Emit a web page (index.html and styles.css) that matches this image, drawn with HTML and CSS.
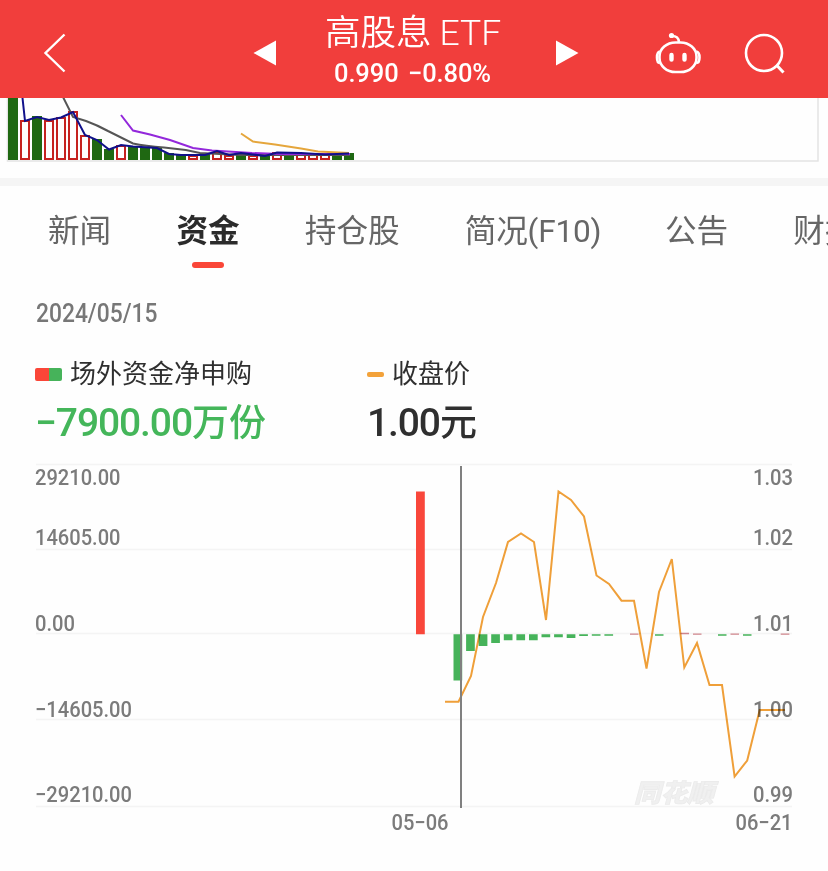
FILE: index.html
```
<!DOCTYPE html>
<html lang="zh-CN">
<head>
<meta charset="utf-8">
<title>高股息ETF</title>
<link rel="stylesheet" href="styles.css">
</head>
<body>
<header class="topbar">
  <svg class="back" width="24" height="42" viewBox="0 0 24 42"><path d="M21.500 2.500L2.500 21L21.500 39.500" fill="none" stroke="#fff" stroke-width="2.400"/></svg>
  <svg class="prev" width="24" height="26" viewBox="0 0 24 26"><path d="M0.500 13L23 0.500V25.500Z" fill="#fff"/></svg>
  <div class="title">
    <h1>高股息<span>ETF</span></h1>
    <p><span>0.990</span><span>−0.80%</span></p>
  </div>
  <svg class="next" width="24" height="26" viewBox="0 0 24 26"><path d="M23.500 13L1 0.500V25.500Z" fill="#fff"/></svg>
  <svg class="robot" width="48" height="44" viewBox="0 0 48 44" fill="none" stroke="#fff" stroke-width="2.600">
    <rect x="4.500" y="11.500" width="37" height="29.500" rx="16" ry="14"/>
    <path d="M4.800 20.500Q2 21 2 26.500T4.800 32M41.200 20.500Q44.500 21 44.500 26.500T41.200 32M24 11C23.500 6 21 5 17 5"/>
    <circle cx="16.500" cy="4.500" r="2.600" fill="#fff" stroke="none"/>
    <path d="M16.500 24V28.500M29.500 24V28.500" stroke-width="4.400" stroke-linecap="round"/>
  </svg>
  <svg class="search" width="42" height="42" viewBox="0 0 42 42" fill="none" stroke="#fff" stroke-width="2.600"><circle cx="20" cy="20" r="18"/><path d="M32.500 32L39.500 39.500" stroke-width="3"/></svg>
</header>

<section class="volume">
  <svg width="828" height="80" viewBox="0 98 828 80">
    <path d="M7.500 98V161H818V98" fill="none" stroke="#e4e4e4" stroke-width="1.500"/>
    <path fill="#1f6812" d="M8 98h10v62H8zM32 116h10v44H32zM92 139h10v21H92zM104 149h10v11h-10zM128 146h10v14h-10zM140 147h10v13h-10zM152 148h10v12h-10zM164 153h10v7h-10zM176 155h10v5h-10zM200 153h10v7h-10zM236 153h10v7h-10zM260 154h10v6h-10zM284 152h10v8h-10zM332 153h10v7h-10zM344 153h10v7h-10z"/>
    <path fill="none" stroke="#c5221f" stroke-width="2" d="M21 121h8v38h-8zM45 121h8v38h-8zM57 118h8v41h-8zM69 112h8v47h-8zM81 136h8v23h-8zM117 146h8v13h-8zM189 156h8v3h-8zM213 153h8v6h-8zM225 156h8v3h-8zM249 156h8v3h-8zM273 153h8v6h-8zM297 154h8v5h-8zM309 155h8v4h-8zM321 155h8v4h-8z"/>
    <g fill="none" stroke-width="2">
      <path stroke="#555" d="M63 97L73 117L86 121Q97 125 108 131L133 143.500Q145 146 164 147.500T200 153L240 155H350"/>
      <path stroke="#9328db" d="M121 115L133 130.500L150 134.500L170 140L193 148L212 150.500L252 153L280 154L350 154"/>
      <path stroke="#e5a63c" d="M241 133.500L253 141.500L275 144.500L301 148.500L318 151.500L349 153"/>
      <path stroke="#10108a" d="M22.500 98L25 121L37 117L49 120L61 117.500L73 112L85 135L97 140L109 149.500L121 145L133 146.500L157 148L169 154L181 155H205L217 151L229 155L241 153L253 154.500L265 156L277 152.500L301 153L325 154.500L349 153.500"/>
    </g>
  </svg>
</section>

<nav class="tabs">
  <a>新闻</a><a class="active">资金</a><a>持仓股</a><a class="wide">简况<span>(F10)</span></a><a>公告</a><a>财报</a>
</nav>

<main>
  <p class="date">2024/05/15</p>
  <div class="summary">
    <div class="metric flow">
      <div class="label"><i class="swatch"></i>场外资金净申购</div>
      <div class="value"><span>−7900.00</span>万份</div>
    </div>
    <div class="metric price">
      <div class="label"><i class="dash"></i>收盘价</div>
      <div class="value"><span>1.00</span>元</div>
    </div>
  </div>
  <svg class="chart" width="828" height="411" viewBox="0 460 828 411">
    <path d="M36 464.500H792M36 549.500H792M36 633.500H792M36 719.500H792M36 806.500H792" stroke="#f4f4f4" stroke-width="1.500"/>
    <text class="mark" x="634" y="802" textLength="80" lengthAdjust="spacingAndGlyphs">同花顺</text>
    <path fill="#f9473b" d="M416 491.500h8.800V634.300H416z"/>
    <path fill="#46b35a" d="M453.500 634.300h8.700v46.300h-8.700zM466.100 634.300h8.700v16.700h-8.700zM478.700 634.300h8.700v11.700h-8.700zM491.200 634.300h8.700v8.800h-8.700zM503.800 634.300h8.700v6h-8.700zM516.400 634.300h8.700v6h-8.700zM529 634.300h8.700v6h-8.700zM541.500 634.300h8.700v3h-8.700zM554.100 634.300h8.700v3h-8.700zM566.700 634.300h8.700v3.700h-8.700zM579.200 634.300h8.700v1.700h-8.700zM591.800 634.300h8.700v1.400h-8.700zM604.400 634.300h8.700v1.400h-8.700zM655 634.300h8.500v1.400H655zM718 634.300h8.500v1.400H718zM743 634.300h8.500v1.400H743z"/>
    <path fill="#cf858c" d="M630 633.500h8.500v1.200H630zM680.500 632.700h8.500v1.600h-8.500zM693 633.500h8.500v1.200H693zM730.500 633.500h8.500v1.200h-8.500zM780.700 633.500h8.700v1.200h-8.700z"/>
    <g class="axis">
      <text x="35" y="485" textLength="85.500" lengthAdjust="spacingAndGlyphs">29210.00</text>
      <text x="35" y="545" textLength="85.500" lengthAdjust="spacingAndGlyphs">14605.00</text>
      <text x="35" y="631" textLength="40" lengthAdjust="spacingAndGlyphs">0.00</text>
      <text x="35" y="717" textLength="97" lengthAdjust="spacingAndGlyphs">−14605.00</text>
      <text x="35" y="802" textLength="97" lengthAdjust="spacingAndGlyphs">−29210.00</text>
      <text x="753" y="485" textLength="40" lengthAdjust="spacingAndGlyphs">1.03</text>
      <text x="753" y="545" textLength="40" lengthAdjust="spacingAndGlyphs">1.02</text>
      <text x="753" y="631" textLength="40" lengthAdjust="spacingAndGlyphs">1.01</text>
      <text x="753" y="717" textLength="40" lengthAdjust="spacingAndGlyphs">1.00</text>
      <text x="753" y="802" textLength="40" lengthAdjust="spacingAndGlyphs">0.99</text>
      <text x="391.500" y="830" textLength="57" lengthAdjust="spacingAndGlyphs">05−06</text>
      <text x="735.500" y="830" textLength="57" lengthAdjust="spacingAndGlyphs">06−21</text>
    </g>
    <path class="close" d="M445 701.700H458.500L471 676L483 617L496 583L508 542L521 533.500L534 542L546 620L558.500 491.500L571 500L584 516.500L596.500 575.500L609 584L621.500 600.700H634L646.500 668.500L659 592L671.800 559L684.300 667.500L697 643L709.500 685H722L734.600 776.500L747.200 760.500L759.700 710H785"/>
    <path d="M461 466V808" stroke="#808080" stroke-width="2"/>
  </svg>
</main>
</body>
</html>
```
FILE: styles.css
```
* { box-sizing: border-box; }
body {
  margin: 0;
  width: 828px;
  height: 871px;
  overflow: hidden;
  background: #fefefe;
  color: #2f2f2f;
  font-family: Roboto, "Noto Sans CJK SC", sans-serif;
}
h1, p { margin: 0; font-weight: 400; }
svg { display: block; flex: none; }

.topbar {
  display: flex;
  height: 98px;
  padding-top: 10px;
  align-items: center;
  background: #f13e3c;
  color: #fff;
}
.back { margin-left: 43px; margin-top: -2px; }
.prev { margin-left: 186px; margin-top: -3px; }
.title { width: 180px; margin-left: 48px; margin-top: -10px; }
.next { margin-left: 50px; margin-top: -3px; }
.robot { margin-left: 76px; margin-top: -3px; }
.search { margin-left: 41px; margin-top: -1px; }
.title h1 {
  height: 44px;
  font: 350 35.500px/43px "Noto Sans CJK SC", sans-serif;
  white-space: nowrap;
}
.title h1 span { margin-left: 8px; font: 350 35.500px/43px Roboto, sans-serif; letter-spacing: 0; }
.title p {
  display: flex;
  gap: 8px;
  margin-left: 9px;
  height: 38px;
  font-size: 26px;
  line-height: 42px;
  font-weight: 500;
  letter-spacing: -0.100px;
  white-space: nowrap;
}
.title p span { transform: scaleX(0.98); transform-origin: 0 50%; }

.volume { height: 88px; border-bottom: 8px solid #f5f5f5; }

.tabs {
  display: flex;
  gap: 65.200px;
  height: 90px;
  padding-left: 48px;
  overflow: hidden;
  font-size: 31.600px;
  line-height: 92px;
  color: #666;
  white-space: nowrap;
}
.tabs a { flex: none; }
.tabs .wide { width: 135px; letter-spacing: -0.200px; }
.tabs .active {
  display: flex;
  flex-direction: column;
  align-items: center;
  color: #2b2b2b;
  font-weight: 700;
}
.tabs .active::after {
  content: "";
  width: 32px;
  height: 6px;
  margin-top: -16px;
  border-radius: 3px;
  background: #fa4638;
}

.date {
  height: 76px;
  padding: 19px 0 0 36px;
  color: #777;
  font-size: 25px;
  font-weight: 500;
  line-height: 38px;
  transform: scaleX(0.912);
  transform-origin: 36px 50%;
}
.summary { display: flex; height: 108px; padding-left: 35px; }
.metric { width: 332px; white-space: nowrap; }
.label {
  display: flex;
  align-items: center;
  height: 44px;
  font-size: 26px;
  line-height: 36px;
}
.swatch {
  width: 27px;
  height: 13px;
  margin-right: 8px;
  border-radius: 2px;
  background: linear-gradient(90deg, #fa4638 13.500px, #9ccf8f 13.500px, #9ccf8f 14.500px, #46b35a 14.500px);
}
.dash {
  width: 17px;
  height: 5px;
  margin-right: 8px;
  border-radius: 2px;
  background: #f3a23a;
}
.value {
  height: 50px;
  font-size: 37px;
  font-weight: 500;
  line-height: 55px;
}
.value span { font-size: 39px; letter-spacing: -1.100px; }
.flow .value { color: #44b65a; }

.axis { fill: #7b7b7b; font: 500 22px Roboto, sans-serif; }
.close { fill: none; stroke: #f0a039; stroke-width: 2px; mix-blend-mode: multiply; }
.mark {
  fill: #f0f0f0;
  stroke: #ebebeb;
  stroke-width: 0.800px;
  font: italic 900 25px "Noto Sans CJK SC", sans-serif;
}
```
